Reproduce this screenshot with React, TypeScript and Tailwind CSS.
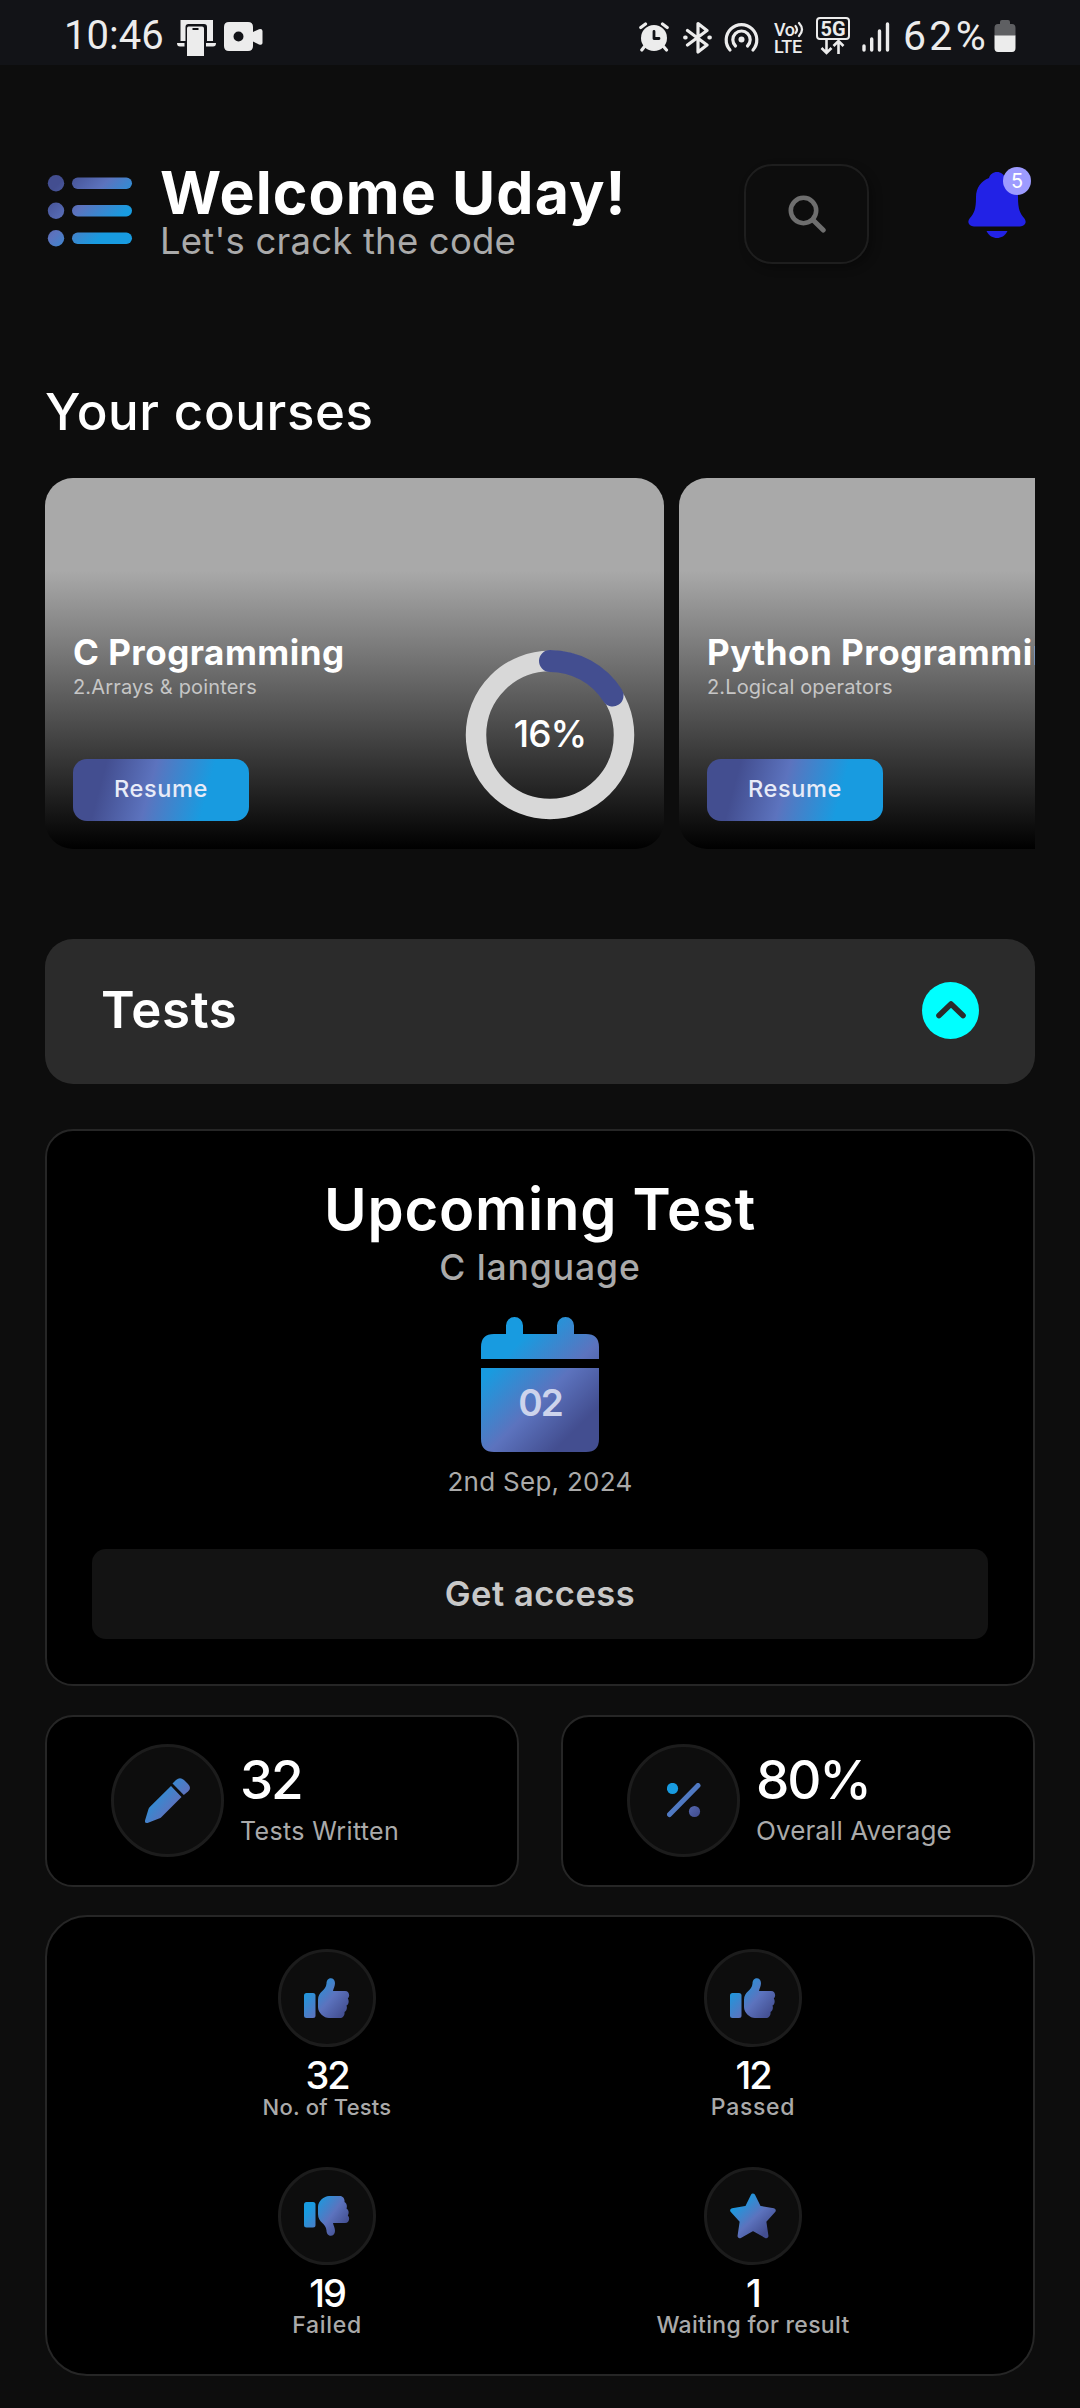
import React from 'react';

type Point = [number, number];

/** Brand gradient, expressed in the pixel space of the drawing that uses it. */
function BrandGradient({ id, from, to, reverse = false }: { id: string; from: Point; to: Point; reverse?: boolean }) {
  const [a, b] = reverse ? ['#434e90', '#189be0'] : ['#189be0', '#434e90'];
  return (
    <defs>
      <linearGradient id={id} gradientUnits="userSpaceOnUse" x1={from[0]} y1={from[1]} x2={to[0]} y2={to[1]}>
        <stop offset="0" stopColor={a} />
        <stop offset={reverse ? 0.48 : 0.55} stopColor="#5c73be" />
        <stop offset="1" stopColor={b} />
      </linearGradient>
    </defs>
  );
}

function StatusBar() {
  return (
    <div className="flex h-[65px] items-start bg-[#121317] font-[Roboto] text-[#ececec]">
      <span className="ml-[64px] mt-[12px] w-[101px] whitespace-nowrap text-[40px] leading-[48px]">10:46</span>
      <svg className="ml-[11px] mt-[19px]" width="41" height="38" fill="#ececec">
        <path d="M4.500 1H37V22H31V8Q31 5 28 5H12.500Q9.500 5 9.500 8V22H4.500Z" />
        <path d="M1 24H8.500V27.500H4Q1 27.500 1 24ZM40 24H30V27.500H37Q40 27.500 40 24Z" />
        <path fillRule="evenodd" d="M12.500 7.500H26Q28 7.500 28 9.500V37H11V9.500Q11 7.500 12.500 7.500ZM16.500 9V11H22.500V9Z" />
      </svg>
      <svg className="ml-[7px] mt-[22px]" width="40" height="30" fill="#ececec">
        <path fillRule="evenodd" d="M5 0H24Q29 0 29 5V10L35 7.200Q38.500 6.500 38.500 9V21Q38.500 23.500 35 22.500L29 19.500V24Q29 29 24 29H5Q0 29 0 24V5Q0 0 5 0ZM14.500 9.500A5 5 0 1 0 14.500 19.500A5 5 0 1 0 14.500 9.500Z" />
      </svg>

      <svg className="ml-[375px] mt-[22px]" width="31" height="30" fill="none">
        <circle cx="15" cy="16" r="13" fill="#ececec" />
        <path d="M1.800 5.500L6.500 2M28.200 5.500L23.500 2M5.500 24.500L2.800 28M24.500 24.500L27.500 28" stroke="#ececec" strokeWidth="3.200" strokeLinecap="round" />
        <path d="M15 9.500V16.500H20" stroke="#121317" strokeWidth="2.800" strokeLinecap="round" strokeLinejoin="round" />
      </svg>
      <svg className="ml-[13px] mt-[21px]" width="30" height="33" fill="none" stroke="#ececec" strokeWidth="3.200" strokeLinejoin="round" strokeLinecap="round">
        <path d="M4.500 9.500L24 24L15 31V2.500L24 9.500L4.500 24" />
        <path d="M2 16.500H2.800M26.200 16.500H27" strokeWidth="3.800" />
      </svg>
      <svg className="ml-[11px] mt-[22px]" width="35" height="31" fill="none" stroke="#ececec" strokeLinecap="round">
        <path d="M6 28A15.300 15.300 0 1 1 29 28" strokeWidth="3.200" />
        <path d="M11.500 24A8.700 8.700 0 1 1 23.500 24" strokeWidth="3.200" />
        <circle cx="17.500" cy="17.500" r="3" fill="#ececec" stroke="none" />
      </svg>
      <div className="ml-[15px] mt-[21px] flex w-[33px] flex-col text-[18px] font-medium leading-[17px]">
        <span className="flex h-[17px]">
          <span className="tracking-[-0.500px]">Vo</span>
          <svg width="10" height="17" fill="none" stroke="#ececec" strokeWidth="2.200" strokeLinecap="round">
            <path d="M1.500 5Q4.500 8.500 1.500 12M5 2Q11 8.500 5 15" />
          </svg>
        </span>
        <span className="tracking-[-0.300px]">LTE</span>
      </div>
      <div className="ml-[9px] mt-[17px] flex w-[34px] flex-col items-center">
        <span className="h-[23px] w-[34px] rounded-[4px] border-2 border-[#ececec] text-center text-[20px] font-bold leading-[20px]">5G</span>
        <svg width="26" height="15" fill="none" stroke="#ececec" strokeWidth="2.600">
          <path d="M6.500 0V12.500M1.500 8L6.500 13L11.500 8M18.500 14V1.500M13.500 6L18.500 1L23.500 6" />
        </svg>
      </div>
      <svg className="ml-[12px] mt-[22px]" width="28" height="30" stroke="#ececec" strokeWidth="3.400" strokeLinecap="round">
        <path d="M2 24V28M9.700 17V28M17.500 9V28M25.500 2V28" />
      </svg>
      <span className="ml-[13px] mt-[12px] w-[87px] whitespace-nowrap text-[41px] leading-[48px] tracking-[3.300px]">62%</span>
      <svg className="ml-[4px] mt-[20px]" width="22" height="32">
        <path d="M6 4V2Q6 0 8 0H14Q16 0 16 2V4H18Q21.500 4 21.500 8V16H0.500V8Q0.500 4 4 4Z" fill="#5e5f62" />
        <path d="M0.500 15.500H21.500V28Q21.500 32 18 32H4Q0.500 32 0.500 28Z" fill="#ececec" />
      </svg>
    </div>
  );
}

function Header() {
  return (
    <header className="mt-[99px] flex h-[100px] items-start">
      <svg className="ml-[2px] mt-[11px]" width="86" height="73">
        <BrandGradient id="menu" from={[10, 10]} to={[58, 58]} reverse />
        <g fill="url(#menu)">
          {[0, 27.5, 55].map((y) => (
            <React.Fragment key={y}>
              <circle cx="9" cy={y + 8.2} r="8.200" />
              <rect x="25" y={y + 2.6} width="60" height="11.400" rx="5.700" />
            </React.Fragment>
          ))}
        </g>
      </svg>
      <div className="ml-[27px] w-[483px] whitespace-nowrap pt-[4px]">
        <h1 className="text-[59px] font-bold leading-[49px] tracking-[1.100px]">Welcome Uday!</h1>
        <p className="text-[36.500px] leading-[49px] tracking-[0.200px] text-[#aaaaaa]">Let's crack the code</p>
      </div>
      <button className="ml-[101px] flex h-[100px] w-[125px] items-center justify-center rounded-[28px] border-2 border-[#1e1e1e] shadow-[4px_4px_10px_rgba(0,0,0,0.3)]">
        <svg width="38" height="38" fill="none" stroke="#6e6e6e">
          <circle cx="15.500" cy="15.500" r="12.700" strokeWidth="4.600" />
          <path d="M25 25L35.200 35" strokeWidth="5" strokeLinecap="round" />
        </svg>
      </button>
      <div className="relative ml-[99px] mt-[8px]">
        <svg width="59" height="67" fill="#2222e6">
          <path d="M29 0C33 0 36 2.500 37 6C45 9 50 16 50 25C50 38 52 41 56 46C59.500 50 57 54.500 52 54.500H6C1 54.500 -1.500 50 2 46C6 41 8 38 8 25C8 16 13 9 21 6C22 2.500 25 0 29 0Z" />
          <path d="M18.500 59H39.500C37 64 33 66 29 66S21 64 18.500 59Z" />
        </svg>
        <span className="absolute left-[35px] top-[-5px] flex size-[28px] items-center justify-center rounded-full bg-[#9d9bff] text-[20px] text-white">5</span>
      </div>
    </header>
  );
}

function ProgressRing({ percent }: { percent: number }) {
  const radius = 74;
  const length = 2 * Math.PI * radius;
  return (
    <div className="relative mt-[171px] size-[172px] shrink-0">
      <svg width="172" height="172" fill="none" transform="rotate(-90)">
        <circle cx="86" cy="86" r={radius} stroke="#d8d8d8" strokeWidth="20.500" />
        <circle cx="86" cy="86" r={radius} stroke="#434e90" strokeWidth="22" strokeLinecap="round" strokeDasharray={`${(length * percent) / 100} ${length}`} />
      </svg>
      <span className="absolute inset-0 flex items-center justify-center pb-[2px] text-[37px] font-medium tracking-[-1px]">{percent}%</span>
    </div>
  );
}

function CourseCard({ title, topic, percent }: { title: string; topic: string; percent: number }) {
  return (
    <article className="flex h-[371px] w-[619px] shrink-0 items-start justify-between rounded-[28px] bg-[linear-gradient(180deg,#a9a9a9_25%,#000000_100%)] pl-[28px] pr-[28px]">
      <div className="whitespace-nowrap pt-[157px]">
        <h3 className="text-[35px] font-bold leading-[35px] tracking-[0.500px]">{title}</h3>
        <p className="text-[20px] leading-[35px] tracking-[0.150px] text-[#c6c6c6]">{topic}</p>
        <button className="mt-[54px] flex h-[62px] w-[176px] items-center justify-center rounded-[14px] bg-[linear-gradient(105deg,#434e90_17.8%,#5c73be_43.8%,#189be0_74.4%)] pb-[2px] text-[23.500px] font-medium tracking-[0.600px] text-[#e8ecf8]">
          Resume
        </button>
      </div>
      <ProgressRing percent={percent} />
    </article>
  );
}

function UpcomingTest() {
  return (
    <section className="mt-[45px] flex h-[557px] flex-col items-center rounded-[28px] border-2 border-[#262626] bg-black px-[45px] pt-[48px]">
      <h2 className="text-[58px] font-semibold leading-[60px] tracking-[0.750px]">Upcoming Test</h2>
      <p className="text-[35.500px] font-medium leading-[58px] tracking-[0.900px] text-[#aaaaaa]">C language</p>
      <div className="relative mt-[20px] h-[135px] w-[118px]">
        <svg width="118" height="135">
          <BrandGradient id="calendar" from={[31.5, 31.5]} to={[103.5, 103.5]} />
          <path
            fill="url(#calendar)"
            d="M0 42V30Q0 17 13 17H25V8.500A8.500 8.500 0 0 1 42 8.500V17H76V8.500A8.500 8.500 0 0 1 93 8.500V17H105Q118 17 118 30V42ZM0 51H118V122Q118 135 105 135H13Q0 135 0 122Z"
          />
        </svg>
        <span className="absolute inset-x-0 top-[66px] text-center text-[37px] font-semibold leading-[40px] tracking-[-2px] text-[#cdd4ec]">02</span>
      </div>
      <p className="text-[26px] leading-[60px] tracking-[0.270px] text-[#aaaaaa]">2nd Sep, 2024</p>
      <button className="mt-[37px] h-[90px] w-full rounded-[14px] bg-[#131313] text-[34.500px] font-semibold tracking-[0.500px] text-[#c8c8c8]">Get access</button>
    </section>
  );
}

function PencilIcon() {
  return (
    <svg width="46" height="46">
      <BrandGradient id="pencil" from={[2, 10]} to={[48, 48]} />
      <g fill="url(#pencil)">
        <path d="M27.500 5.500L31 2Q35 -1.500 39 2L43 6Q47 10 43 13.500L38.800 17Z" />
        <path d="M26 8L36.500 19L16.500 39Q15.500 40 14 40.500L2.500 45Q-0.500 45.500 0 42.500L3.500 31Q4 29.800 5 28.800Z" />
      </g>
    </svg>
  );
}

function PercentIcon() {
  return (
    <svg width="34" height="35">
      <BrandGradient id="percent" from={[2, 2]} to={[31, 33]} />
      <circle cx="5.500" cy="5.500" r="5.600" fill="#189be0" />
      <circle cx="27.500" cy="28.500" r="5.600" fill="url(#percent)" />
      <path d="M2.500 31.500L31 2.500" stroke="#5079c2" strokeWidth="5" strokeLinecap="round" />
    </svg>
  );
}

const THUMB_HAND =
  'M22.500 5.500C22.500 -1.500 31 -1.500 31 5C31 8 29.500 10.500 29 13H41C45.500 13 46.200 18.500 43.800 20.500C45.300 22.500 44.800 26.500 42.500 27.500C43.500 30 42.500 33 40.500 34C41 37 39 40 36 40H25C20 40 14 35 14 29V22C14 13 22 13 22.500 5.500Z';

function ThumbUpIcon({ id }: { id: string }) {
  return (
    <svg width="46" height="40">
      <BrandGradient id={id} from={[2, 10]} to={[37, 41]} />
      <g fill={`url(#${id})`}>
        <rect x="0" y="15" width="11.500" height="25" rx="2.500" />
        <path d={THUMB_HAND} />
      </g>
    </svg>
  );
}

function ThumbDownIcon() {
  return (
    <svg width="46" height="40">
      <BrandGradient id="thumb-down" from={[10, 6]} to={[42, 30]} />
      <g fill="url(#thumb-down)">
        <rect x="0" y="6" width="11.500" height="25.500" rx="2.500" />
        <path d="M22.500 34.500C22.500 41.500 31 41.500 31 35C31 32 29.500 29.500 29 27H41C45.500 27 46.200 21.500 43.800 19.500C45.300 17.500 44.800 13.500 42.500 12.500C43.500 10 42.500 7 40.500 6C41 3 39 0 36 0H25C20 0 14 5 14 11V18C14 27 22 27 22.500 34.500Z" />
      </g>
    </svg>
  );
}

function StarIcon() {
  return (
    <svg width="46" height="46">
      <BrandGradient id="star" from={[9, 8]} to={[37, 38]} />
      <path
        d="M23 2.800L29 15L43.500 17.500L34 28L36.200 43L23 35.500L9.800 43L12 28L2.500 17.500L17 15Z"
        fill="url(#star)"
        stroke="url(#star)"
        strokeWidth="4.500"
        strokeLinejoin="round"
      />
    </svg>
  );
}

function StatCard({ icon, value, label, spacing }: { icon: React.ReactNode; value: string; label: string; spacing: string }) {
  return (
    <article className="flex h-[172px] w-[474px] items-start rounded-[28px] border-2 border-[#262626] bg-black pl-[64px]">
      <div className="mt-[27px] flex size-[113px] shrink-0 items-center justify-center rounded-full border-3 border-[#1c1c1c] bg-[#0d0d0d]">{icon}</div>
      <div className="ml-[16px] mt-[38px] whitespace-nowrap">
        <p className="text-[53px] font-medium leading-[50px] tracking-[-2.200px]">{value}</p>
        <p className={`text-[#aaaaaa] ${spacing}`}>{label}</p>
      </div>
    </article>
  );
}

function ResultItem({ icon, value, label, spacing }: { icon: React.ReactNode; value: string; label: string; spacing: string }) {
  return (
    <div className="flex flex-col items-center">
      <div className="flex size-[98px] items-center justify-center rounded-full border-3 border-[#1c1c1c] bg-[#0d0d0d]">{icon}</div>
      <p className="mt-[9px] text-[38px] font-medium leading-[38px] tracking-[-2px]">{value}</p>
      <p className={`font-medium text-[#aaaaaa] ${spacing}`}>{label}</p>
    </div>
  );
}

export default function App() {
  return (
    <div className="h-[2408px] w-[1080px] overflow-hidden bg-[#0d0d0d] font-[Inter,sans-serif] text-white">
      <StatusBar />
      <main className="px-[45px]">
        <Header />
        <h2 className="mt-[117px] text-[51px] font-medium leading-[61px] tracking-[0.600px]">Your courses</h2>
        <div className="mt-[36px] flex gap-[15px] overflow-hidden">
          <CourseCard title="C Programming" topic="2.Arrays & pointers" percent={16} />
          <CourseCard title="Python Programming" topic="2.Logical operators" percent={16} />
        </div>

        <div className="mt-[90px] flex h-[145px] items-center justify-between rounded-[28px] bg-[#2b2b2b] px-[56px] pb-[3px]">
          <h2 className="text-[51px] font-semibold leading-[50px] tracking-[0.600px]">Tests</h2>
          <button className="flex size-[57px] items-center justify-center rounded-full bg-[#00ffff]">
            <svg width="32" height="20" fill="none" stroke="#2b2b2b" strokeWidth="5.600" strokeLinecap="round" strokeLinejoin="round">
              <path d="M4 15.500L16 4L28 15.500" />
            </svg>
          </button>
        </div>

        <UpcomingTest />

        <div className="mt-[29px] flex justify-between">
          <StatCard icon={<PencilIcon />} value="32" label="Tests Written" spacing="text-[25px] leading-[52px] tracking-[0.350px]" />
          <StatCard icon={<PercentIcon />} value="80%" label="Overall Average" spacing="text-[26px] leading-[52px] tracking-[0.100px]" />
        </div>

        <section className="mt-[28px] grid h-[461px] grid-cols-2 content-start gap-y-[47px] rounded-[42px] border-2 border-[#262626] bg-black px-[67px] pt-[32px]">
          <ResultItem icon={<ThumbUpIcon id="thumb-total" />} value="32" label="No. of Tests" spacing="text-[22px] leading-[26px] tracking-[0.210px]" />
          <ResultItem icon={<ThumbUpIcon id="thumb-passed" />} value="12" label="Passed" spacing="text-[23px] leading-[26px] tracking-[0.700px]" />
          <ResultItem icon={<ThumbDownIcon />} value="19" label="Failed" spacing="text-[23px] leading-[26px] tracking-[0.700px]" />
          <ResultItem icon={<StarIcon />} value="1" label="Waiting for result" spacing="text-[23px] leading-[26px] tracking-[0.300px]" />
        </section>
      </main>
    </div>
  );
}
